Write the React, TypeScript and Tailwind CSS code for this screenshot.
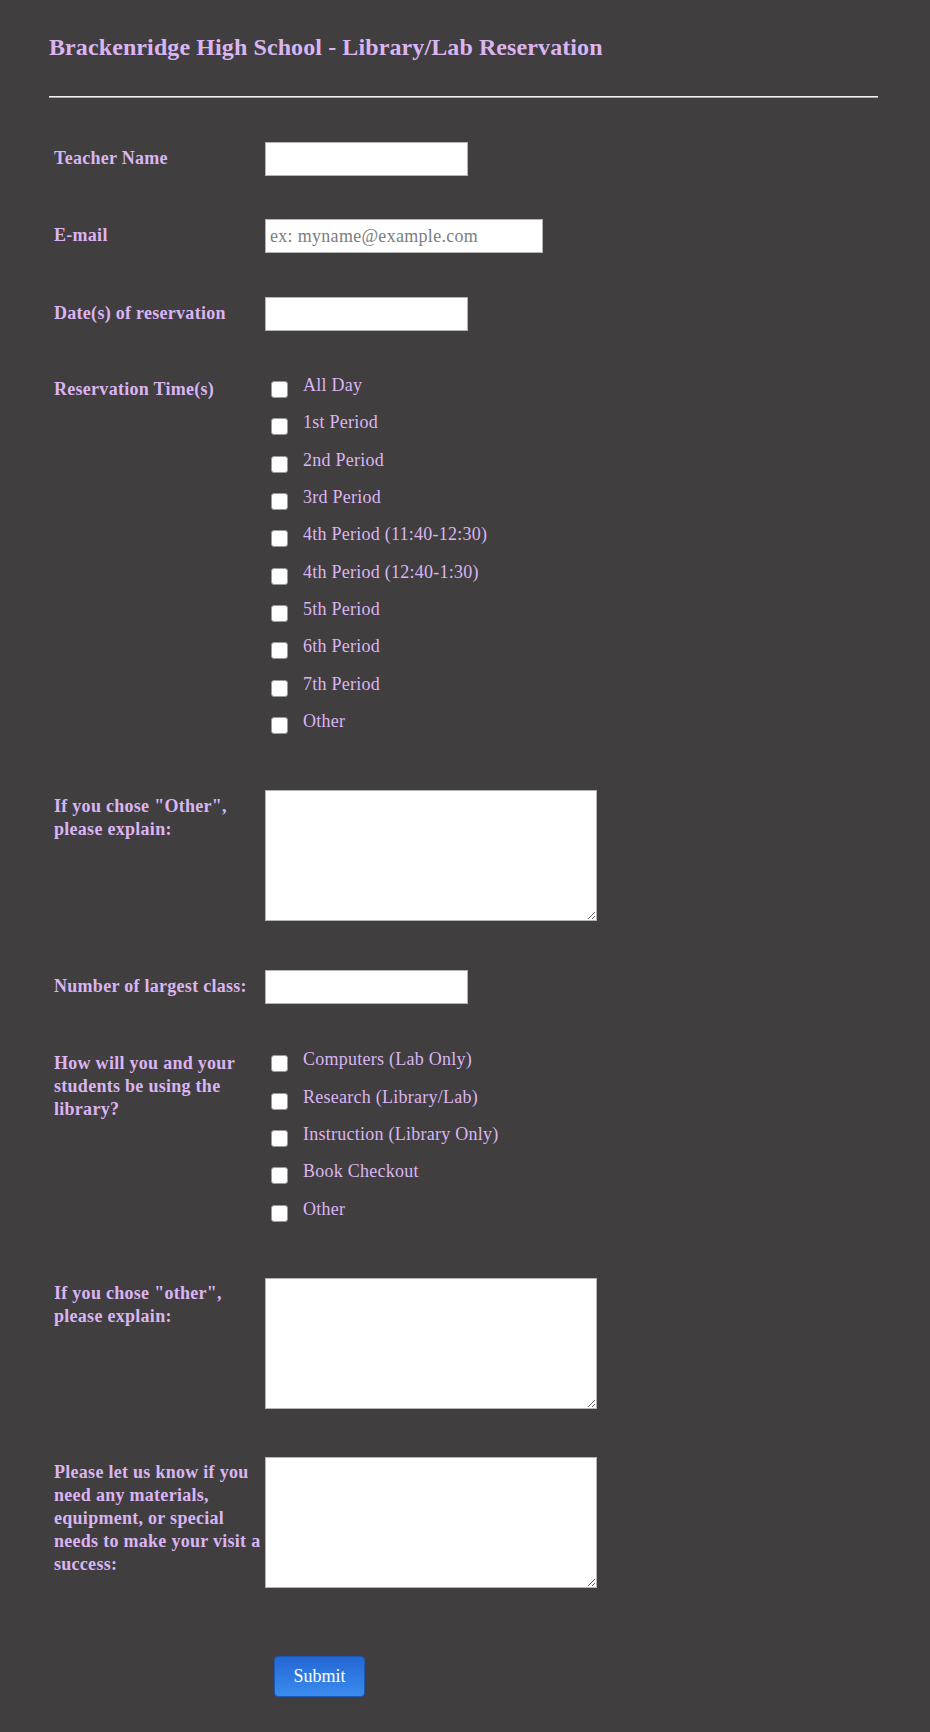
import type { ReactNode } from "react";

const timeOptions = [
  "All Day",
  "1st Period",
  "2nd Period",
  "3rd Period",
  "4th Period (11:40-12:30)",
  "4th Period (12:40-1:30)",
  "5th Period",
  "6th Period",
  "7th Period",
  "Other",
];

const usageOptions = [
  "Computers (Lab Only)",
  "Research (Library/Lab)",
  "Instruction (Library Only)",
  "Book Checkout",
  "Other",
];

interface RowProps {
  label: ReactNode;
  className?: string;
  children: ReactNode;
}

function Row({ label, className = "", children }: RowProps) {
  return (
    <div className={`flex items-start ${className}`}>
      <div className="w-[211px] shrink-0 pt-[4.5px] pr-[2px] text-[18px] font-bold leading-[23px] tracking-[0.28px]">
        {label}
      </div>
      {children}
    </div>
  );
}

function TextBox({ width, placeholder }: { width: string; placeholder?: string }) {
  return (
    <input
      type="text"
      placeholder={placeholder}
      className={`${width} h-[34px] border border-[#b4b4b4] bg-white px-[4px] text-[18px] tracking-[0.3px] text-black placeholder:text-[#7d7d7d] outline-none`}
    />
  );
}

function TextArea() {
  return (
    <textarea className="block h-[131px] w-[332px] border border-[#b4b4b4] bg-white p-[4px] text-[18px] text-black outline-none" />
  );
}

function CheckList({ options }: { options: string[] }) {
  return (
    <div className="flex flex-col">
      {options.map((opt) => (
        <label key={opt} className="flex h-[37.33px] items-start">
          <input
            type="checkbox"
            className="mt-[8px] ml-[6px] h-[17px] w-[17px] shrink-0 appearance-none rounded-[3px] border border-[#9a9a9a] bg-white"
          />
          <span className="ml-[15px] pt-[1px] text-[18px] leading-[23px] tracking-[0.25px]">{opt}</span>
        </label>
      ))}
    </div>
  );
}

export default function App() {
  return (
    <div className="min-h-[1732px] bg-[#403e3f] font-['Liberation_Serif',serif] text-[#dab5f2]">
      <div className="pl-[49px] pr-[52px] pt-[33px]">
        <h1 className="text-[24px] font-bold leading-[28px] tracking-[0.1px]">
          Brackenridge High School - Library/Lab Reservation
        </h1>
        <div className="mt-[35px] h-[2px] border-t border-[#f2f2f2] border-b border-b-[#a9a9a9]" />
      </div>

      <form className="flex flex-col pl-[54px]">
        <Row label="Teacher Name" className="mt-[44px]">
          <TextBox width="w-[203px]" />
        </Row>
        <Row label="E-mail" className="mt-[43px]">
          <TextBox width="w-[278px]" placeholder="ex: myname@example.com" />
        </Row>
        <Row label="Date(s) of reservation" className="mt-[44px]">
          <TextBox width="w-[203px]" />
        </Row>
        <Row label="Reservation Time(s)" className="mt-[42px]">
          <CheckList options={timeOptions} />
        </Row>
        <Row label={'If you chose "Other", please explain:'} className="mt-[44px]">
          <TextArea />
        </Row>
        <Row label="Number of largest class:" className="mt-[49px]">
          <TextBox width="w-[203px]" />
        </Row>
        <Row label="How will you and your students be using the library?" className="mt-[43px]">
          <CheckList options={usageOptions} />
        </Row>
        <Row label={'If you chose "other", please explain:'} className="mt-[44px]">
          <TextArea />
        </Row>
        <Row
          label="Please let us know if you need any materials, equipment, or special needs to make your visit a success:"
          className="mt-[48px]"
        >
          <TextArea />
        </Row>
        <div className="mt-[68px] ml-[220px]">
          <button
            type="button"
            className="h-[41px] w-[91px] rounded-[4px] border border-[#1c58b8] bg-gradient-to-b from-[#2466d4] to-[#3b8cee] text-[18px] text-white"
          >
            Submit
          </button>
        </div>
      </form>
    </div>
  );
}
